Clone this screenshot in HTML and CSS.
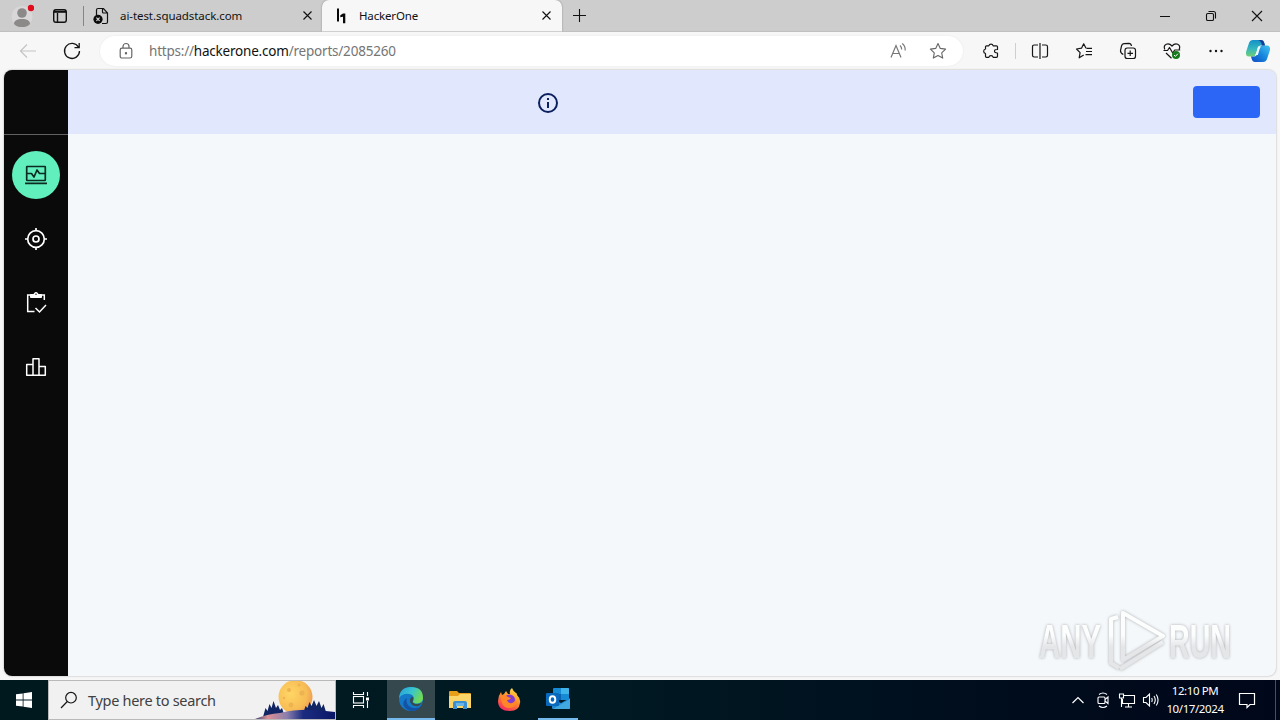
FILE: index.html
```html
<!DOCTYPE html>
<html lang="en">
<head>
  <meta charset="UTF-8">
  <meta name="viewport" content="width=device-width, initial-scale=1.0">
  <title>HackerOne</title>
  <link rel="stylesheet" href="styles.css">
</head>
<body>

  <!-- Tabs -->
  <header class="tab-bar">
    <svg class="avatar" width="24" height="24" viewBox="0 0 24 24">
      <circle cx="12" cy="12.500" r="10.500" fill="#d9d7d7"/>
      <circle cx="12" cy="9" r="4.800" fill="#8c8a89"/>
      <path d="M4 20c0-3.500 3-5 8-5s8 1.500 8 5c-2 2.500-5 3-8 3s-6-.5-8-3z" fill="#8c8a89"/>
      <circle cx="21" cy="4" r="3.200" fill="#e00b1c"/>
    </svg>
    <svg class="workspace" width="16" height="16" viewBox="0 0 16 16" fill="none" stroke="#111" stroke-width="1.400">
      <rect x="1.700" y="1.700" width="12.600" height="12.600" rx="2.200"/>
      <path d="M2 3.800h12" stroke-width="2"/>
      <path d="M5.500 5v9"/>
    </svg>
    <div class="tab">
      <svg class="favicon" width="18" height="18" viewBox="0 0 18 18">
        <path d="M4.500 8V3q0-1.500 1.500-1.500h5.500L15.500 6v9q0 1.500-1.500 1.500h-4M10.500 1.500V5q0 1 1 1h4" fill="none" stroke="#111" stroke-width="1.200"/>
        <circle cx="6" cy="12.300" r="4.600" fill="#0b0b0b"/>
        <path d="M4.400 10.700l3.200 3.200m0-3.200l-3.200 3.200" stroke="#ddd" stroke-width="1.100"/>
      </svg>
      <span class="tab-title tab-title-first">ai-test.squadstack.com</span>
      <svg class="tab-close" width="11" height="11" viewBox="0 0 11 11" stroke="#111" stroke-width="1.100"><path d="M1.500 1.500l8 8m0-8l-8 8"/></svg>
    </div>
    <div class="tab active">
      <svg class="favicon" width="18" height="18" viewBox="0 0 18 18" fill="#080808">
        <path d="M5 1.500h2v13H5zM8.300 8.200L11 6.500h2.300v9.800H11V9.800l-2.700.5z"/>
      </svg>
      <span class="tab-title">HackerOne</span>
      <svg class="tab-close" width="11" height="11" viewBox="0 0 11 11" stroke="#111" stroke-width="1.100"><path d="M1.500 1.500l8 8m0-8l-8 8"/></svg>
    </div>
    <svg class="new-tab" width="15" height="15" viewBox="0 0 15 15" stroke="#111" stroke-width="1.100"><path d="M7.500 1v13M1 7.500h13"/></svg>
    <div class="window-buttons">
      <svg width="12" height="12" viewBox="0 0 12 12" fill="none" stroke="#111"><path d="M1 6.500h10"/></svg>
      <svg width="12" height="12" viewBox="0 0 12 12" fill="none" stroke="#111" stroke-width="1.100"><rect x="1.500" y="3.500" width="7" height="7" rx="1.300"/><path d="M3.500 1.500H8.500q2 0 2 2v5"/></svg>
      <svg width="12" height="12" viewBox="0 0 12 12" fill="none" stroke="#111" stroke-width="1.100"><path d="M1 1l10 10m0-10L1 11"/></svg>
    </div>
  </header>

  <!-- Address bar and tools -->
  <div class="toolbar">
    <span class="tool"><svg width="20" height="20" viewBox="0 0 20 20" fill="none" stroke="#c4c4c4" stroke-width="1.200"><path d="M18 10H2.500M9 3.500L2.500 10 9 16.500"/></svg></span>
    <span class="tool"><svg width="20" height="20" viewBox="0 0 20 20" fill="none" stroke="#161616" stroke-width="1.300"><path d="M16.500 6.200A7.500 7.500 0 1 0 17.500 10M17.200 2v4.700h-4.700"/></svg></span>
    <div class="address">
      <svg class="lock" width="16" height="18" viewBox="0 0 16 18" fill="none" stroke="#666" stroke-width="1.200"><rect x="2.200" y="6.200" width="11.600" height="9.800" rx="1.800"/><path d="M5 6V4.500a3 3 0 0 1 6 0V6"/><circle cx="8" cy="11.200" r=".6" fill="#666"/></svg>
      <span class="url">https://<b>hackerone.com</b>/reports/2085260</span>
      <svg class="read" width="20" height="18" viewBox="0 0 20 18" fill="none" stroke="#777" stroke-width="1.200"><path d="M3 15.500L8 3.500l5 12M4.800 11.500h6.500M12 3.500q1.700 1.500 1.700 4M14.200 1.500Q17.500 4 17.200 8.500"/></svg>
      <svg width="18" height="18" viewBox="0 0 18 18" fill="none" stroke="#666" stroke-width="1.100" stroke-linejoin="round"><path d="M9 1.500l2.300 4.900 5.300.7-3.900 3.700 1 5.300L9 13.500l-4.700 2.600 1-5.300L1.400 7.100l5.300-.7z"/></svg>
    </div>
    <span class="tool tool-ext"><svg width="18" height="18" viewBox="0 0 18 18" fill="none" stroke="#161616" stroke-width="1.200" stroke-linejoin="round"><path d="M4.500 3.800h2.300a2.300 2.300 0 0 1 4.400 0h3.300q1 0 1 1v2.700q-3-.2-3 1.700t3 1.800v3.300q0 1-1 1h-3.300a2.300 2.300 0 0 0-4.400 0H4.500q-1 0-1-1v-2.800a2.300 2.300 0 0 1 0-4.500V4.800q0-1 1-1z"/></svg></span>
    <span class="separator"></span>
    <span class="tool"><svg width="18" height="18" viewBox="0 0 18 18" fill="none" stroke="#161616" stroke-width="1.200"><path d="M7 3H3.200q-1.700 0-1.700 1.700v8.600q0 1.700 1.700 1.700H7M11 3h3.800q1.700 0 1.700 1.700v8.600q0 1.700-1.700 1.700H11M9 1v16"/></svg></span>
    <span class="tool"><svg width="18" height="18" viewBox="0 0 18 18" fill="none" stroke="#161616" stroke-width="1.200" stroke-linejoin="round"><path d="M11 6.300L8.700 1.800 6.500 6.200l-5 .8 3.600 3.600-.9 5.200L8.700 13M11.500 6.300H17M11 9.500h6M10.500 12.700H17"/></svg></span>
    <span class="tool"><svg width="18" height="18" viewBox="0 0 18 18" fill="none" stroke="#161616" stroke-width="1.200"><rect x="6" y="6" width="10.500" height="10.500" rx="2.300"/><path d="M11.200 8.500v5.500M8.500 11.300H14M4.300 12.500Q1.300 11 1.500 8.500L2.500 4q.5-2 2.500-2.300l5-.4q2 0 2.500 2.700"/></svg></span>
    <span class="tool"><svg width="20" height="18" viewBox="0 0 20 18" fill="none" stroke="#161616" stroke-width="1.200" stroke-linejoin="round"><path d="M2.800 7.500Q1.200 3.500 4.300 2.200 7.300 1 10 4q2.700-3 5.700-1.800 3 1.300 1.500 5.300M1.500 8.500h4L7.500 5.500l3.200 5.500 2-3h5.500M4 11l5.500 5.200"/><circle cx="14" cy="13" r="4" fill="#157a1c" stroke="none"/><path d="M12 13l1.400 1.400 2.500-2.700" stroke="#fff" stroke-width="1"/></svg></span>
    <span class="tool"><svg width="18" height="18" viewBox="0 0 18 18" fill="#161616"><circle cx="3.500" cy="9" r="1.200"/><circle cx="9" cy="9" r="1.200"/><circle cx="14.500" cy="9" r="1.200"/></svg></span>
    <span class="tool tool-copilot">
      <svg width="26" height="24" viewBox="0 0 26 24">
        <defs>
          <linearGradient id="cop-left" x1="0" y1="0" x2="0" y2="1"><stop offset="0" stop-color="#148fc9"/><stop offset=".55" stop-color="#37b8bd"/><stop offset="1" stop-color="#72cf72"/></linearGradient>
          <linearGradient id="cop-right" x1="1" y1="0" x2="0" y2="1"><stop offset="0" stop-color="#43c6f2"/><stop offset=".5" stop-color="#1686dc"/><stop offset="1" stop-color="#1149c4"/></linearGradient>
        </defs>
        <path d="M8 1h8q2.500 0 3.300 3l.7 2.500h-4q-2.500 0-3.300 3L11 15q-.8 2.500-3 2.500H4Q.5 17.500 1 13L4 4Q5 1 8 1z" fill="url(#cop-left)"/>
        <path d="M18 23h-8q-2.500 0-3.300-3L6 17.500h3q2.500 0 3.300-3L14 9q.8-2.500 3-2.500h5q3.500 0 3 4.500l-3 9q-1 3-4 3z" fill="url(#cop-right)"/>
        <path d="M15 1h1q2.500 0 3.300 3l.7 2.500h-3Q16 1.500 13 1z" fill="#163f99"/>
        <path d="M13 7.500h3q-1 1-1.700 3.500l-1.400 5H10q1-1 1.500-3z" fill="#eefaff"/>
      </svg>
    </span>
  </div>

  <!-- Page -->
  <div class="viewport">
    <nav class="sidebar">
      <div class="logo-space"></div>
      <a class="nav-item selected"><svg width="24" height="24" viewBox="0 0 24 24" fill="none" stroke="#0b2b22" stroke-width="1.700" stroke-linejoin="round"><rect x="2.700" y="3.500" width="18.600" height="14" rx=".5"/><path d="M3 10.500h4.500L10 14l3-7 2.500 3.500H21M1 20.300h22"/></svg></a>
      <a class="nav-item"><svg width="24" height="24" viewBox="0 0 24 24" fill="none" stroke="#fff" stroke-width="1.700"><circle cx="12" cy="12" r="8.300"/><circle cx="12" cy="12" r="3"/><path d="M12 1v3M12 20v3M1 12h3M20 12h3"/></svg></a>
      <a class="nav-item"><svg width="24" height="24" viewBox="0 0 24 24" fill="none" stroke="#fff" stroke-width="1.500"><path d="M10.500 20.500H3.700V4H20.300v5M11.500 17l4 4L22 14"/><path d="M6.500 3.500h3.500a2 2 0 0 1 4 0h3.500v3h-11z" fill="#fff" stroke-width="1"/><circle cx="12" cy="3.300" r=".7" fill="#0a0a0a" stroke="none"/></svg></a>
      <a class="nav-item"><svg width="24" height="24" viewBox="0 0 24 24" fill="none" stroke="#fff" stroke-width="1.500" stroke-linejoin="round"><path d="M9 20.300V3.700h6v16.600zM9 9.500H2.700v10.800H9M15 11.500h6.300v8.800H15"/></svg></a>
    </nav>
    <main>
      <div class="banner">
        <svg class="info" width="24" height="24" viewBox="0 0 24 24"><circle cx="12" cy="12" r="9" fill="none" stroke="#0c205f" stroke-width="2"/><path d="M11 11h2v6h-2zM11 7h2v2h-2z" fill="#0c205f"/></svg>
        <button class="banner-button" aria-label="Dismiss"></button>
      </div>
    </main>
  </div>

  <!-- Taskbar -->
  <footer class="taskbar">
    <div class="start"><svg width="16" height="16" viewBox="0 0 16 16" fill="#fff"><path d="M0 2.300l6.700-.9v6.100H0zM7.500 1.300L16 0v7.500H7.500zM0 8.500h6.700v6.100L0 13.700zM7.500 8.500H16V16l-8.500-1.300z"/></svg></div>
    <div class="search">
      <svg class="search-icon" width="18" height="18" viewBox="0 0 18 18" fill="none" stroke="#161616" stroke-width="1.200"><circle cx="11" cy="6.700" r="5.300"/><path d="M7.300 10.500L1 17"/></svg>
      <span class="search-label">Type here to search</span>
      <svg class="scene" width="80" height="38" viewBox="0 0 80 38">
        <defs>
          <linearGradient id="hill" x1="0" y1="0" x2="1" y2="0"><stop offset="0" stop-color="#33417d"/><stop offset=".16" stop-color="#dc8f94"/><stop offset=".4" stop-color="#8a7fae"/><stop offset=".6" stop-color="#1b2c80"/><stop offset="1" stop-color="#0b1767"/></linearGradient>
          <radialGradient id="moon" cx=".35" cy=".4" r=".7"><stop offset="0" stop-color="#ffd665"/><stop offset=".7" stop-color="#f7bc55"/><stop offset="1" stop-color="#ec9852"/></radialGradient>
        </defs>
        <circle cx="40.500" cy="16" r="17" fill="url(#moon)"/>
        <g fill="#edb252"><circle cx="34" cy="9" r="2"/><circle cx="47" cy="12" r="2.600"/><circle cx="36" cy="24" r="2.400"/><circle cx="44" cy="4" r="1.500"/><circle cx="29" cy="17" r="1.200"/></g>
        <path d="M8 36l2.500-9 2 3 2-7 2 4 2-7 2.500 7 2-3 2 5 2-2 3 9zM48 33l2.500-8 2 2 2-6 2 4 2.500-6 2.500 6 2.500-5 2.500 7 2-4 3.500 11z" fill="#112463"/>
        <path d="M0 38q12-5 25-6 16-4 36-3 10 1 19 2v7z" fill="url(#hill)"/>
      </svg>
    </div>
    <div class="task"><svg width="18" height="18" viewBox="0 0 18 18" fill="none" stroke="#fff" stroke-width="1.100"><path d="M1.500 1v2.500h10V1M1.500 17v-2.500h10V17M15.500 1v4M15.500 10v7"/><rect x="1.500" y="5.500" width="10" height="6.500"/><path d="M14 6.500h3v3h-3z" fill="#fff" stroke="none"/></svg></div>
    <div class="task running current">
      <svg width="26" height="26" viewBox="0 0 26 26">
        <defs><linearGradient id="edge-top" x1="0" y1="0" x2="1" y2=".4"><stop offset="0" stop-color="#279edb"/><stop offset=".55" stop-color="#38c5ce"/><stop offset="1" stop-color="#6fda58"/></linearGradient></defs>
        <circle cx="13" cy="13" r="12" fill="#1479c9"/>
        <path d="M1 12Q2 1 13 1q12 0 12 11c0 4-3 5.500-6.500 5.500-3 0-4.500-1.500-3-3Q17 9 11.500 8 5 7 1 12z" fill="url(#edge-top)"/>
        <path d="M9 12c-2 5 2 10 8 10 3 0 5-1 6-2-3 5-9 6-13 4-6-3-6-9-1-12z" fill="#1353a5"/>
        <path d="M14 10.500c3 2-.5 4.500 1 6 2 2.500 6 1.500 8.500.2-.7 2.300-2.500 3.500-4.500 3.500-6 .5-9.500-6-5-9.700z" fill="#344b4f"/>
      </svg>
    </div>
    <div class="task"><svg width="22" height="20" viewBox="0 0 22 20"><path d="M0 2q0-1 1-1h7l2 2h11q1 0 1 1v14H0z" fill="#e99e17"/><path d="M0 6h9l2-2h11v14H0z" fill="#fbd568"/><path d="M4 19v-6q0-2 2-2h10q2 0 2 2v6h-4v-3H8v3z" fill="#3991d3"/><path d="M7 13h8v3H7z" fill="#69b5e5"/></svg></div>
    <div class="task">
      <svg width="24" height="24" viewBox="0 0 24 24">
        <defs><linearGradient id="fox" x1=".8" y1="0" x2=".3" y2="1"><stop offset="0" stop-color="#ffe54a"/><stop offset=".45" stop-color="#ff9327"/><stop offset="1" stop-color="#f42b62"/></linearGradient></defs>
        <path d="M4 4l1 3 2-1 2-3 2 3h2q-1-4 2-6 1 3 4 5 1 0 1 2 4 4 3 8-1 8-10 8Q1 23 1 13q0-5 3-9z" fill="url(#fox)"/>
        <circle cx="12.500" cy="12" r="5.500" fill="#803bd2"/>
        <path d="M4 8q4-2 7 1l3 1q-1 2-4 2 1 4 5 3 4-1 3-6 4 10-6 11Q4 20 4 8z" fill="#ff8727"/>
      </svg>
    </div>
    <div class="task running outlook">
      <svg width="26" height="24" viewBox="0 0 26 24">
        <path d="M8 2q0-1 1-1h14q1 0 1 1v11H8z" fill="#168bd5"/><path d="M16 1h7q1 0 1 1v5h-8z" fill="#40b3e8"/><path d="M8 7h8v6H8z" fill="#0b62b2"/><path d="M7 12l9 4 9-5v10q0 1-1 1H8q-1 0-1-1z" fill="#1f86d0"/>
        <path d="M8 22l17-10v9q0 1-1 1z" fill="#42a9e0"/>
        <rect x="1" y="6" width="13" height="13" rx="1" fill="#0869bd"/><ellipse cx="7.500" cy="12.500" rx="2.800" ry="3.300" fill="none" stroke="#fff" stroke-width="1.900"/>
      </svg>
    </div>
    <div class="tray">
      <svg width="14" height="18" viewBox="0 0 14 18" fill="none" stroke="#fff" stroke-width="1.200"><path d="M1.500 12L7 6.500l5.500 5.500"/></svg>
      <svg class="meet" width="14" height="18" viewBox="0 0 14 18" fill="none" stroke="#fff" stroke-width="1.100"><rect x="2" y="6" width="7" height="6.500" rx="1"/><path d="M9 8.500L12 6v6.500L9 10M3 3.500q4-3 8 0M3 15q4 3 8 0"/></svg>
      <svg class="network" width="18" height="18" viewBox="0 0 18 18" fill="none" stroke="#fff" stroke-width="1.100"><path d="M6 4.500h10.500v8H4.500V8M10.500 13v3M7 16h7"/><path d="M1.500 3h4v4h-4zM3.500 7v9"/></svg>
      <svg class="volume" width="18" height="18" viewBox="0 0 18 18" fill="none" stroke="#fff" stroke-width="1.100"><path d="M1.500 6.500h2.500L7.500 3v12L4 11.500H1.500zM9.700 7q1 2 0 4M12 5q2.500 4 0 8M14.300 3.500q3.500 5.500 0 11"/></svg>
      <div class="clock"><span>12:10 PM</span><span>10/17/2024</span></div>
      <svg class="notice" width="18" height="18" viewBox="0 0 18 18" fill="none" stroke="#fff" stroke-width="1.200"><path d="M1.500 2.500h15v11H12l-3 3v-3H1.500z"/></svg>
      <span class="show-desktop"></span>
    </div>
  </footer>

  <svg class="watermark" width="210" height="70" viewBox="0 0 210 70">
    <defs>
      <linearGradient id="mark" gradientUnits="userSpaceOnUse" x1="0" y1="4" x2="0" y2="62"><stop offset=".4" stop-color="#fcfdfd"/><stop offset=".6" stop-color="#e4e6e8"/></linearGradient>
    </defs>
    <g class="mark-text" fill="url(#mark)">
      <text x="3" y="50" textLength="62" lengthAdjust="spacingAndGlyphs">ANY</text>
      <text x="133" y="50" textLength="62" lengthAdjust="spacingAndGlyphs">RUN</text>
    </g>
    <g fill="none" stroke="url(#mark)" stroke-width="4" stroke-linejoin="round">
      <path d="M82 9l-7 2v44l8 5"/>
      <path d="M127 28L87 5v47l40-24z"/>
      <path d="M127 34L84 61"/>
    </g>
  </svg>

</body>
</html>
```
FILE: styles.css
```css
* {
  margin: 0;
  padding: 0;
  box-sizing: border-box;
}

body {
  width: 1280px;
  height: 720px;
  overflow: hidden;
  display: flex;
  flex-direction: column;
  font-family: 'Noto Sans', 'Open Sans', sans-serif;
  background: #f7f7f7;
  color: #111;
}

svg {
  display: block;
  flex-shrink: 0;
}

/* Tabs */
.tab-bar {
  height: 32px;
  display: flex;
  align-items: center;
  background: #cdcdcd;
  border-bottom: 1px solid #c0c0c0;
}

.avatar {
  margin-left: 10px;
}

.workspace {
  margin-left: 18px;
}

.tab {
  width: 239px;
  height: 32px;
  display: flex;
  align-items: center;
  padding: 0 9px 0 9px;
  margin-left: 15px;
}

.tab:not(.active)::before {
  content: '';
  width: 1px;
  height: 20px;
  margin-right: 8px;
  margin-left: -9px;
  background: #858585;
}

.tab.active {
  width: 240px;
  margin-left: 0;
  padding: 0 10px;
  background: #f7f7f7;
  border-radius: 7px 7px 0 0;
  box-shadow: 0 0 2px rgba(0, 0, 0, 0.35);
  clip-path: inset(0 -3px 0 -3px);
}

.tab-title {
  font-size: 11.5px;
  white-space: nowrap;
  margin-left: 9px;
  letter-spacing: -0.15px;
}

.tab-title-first {
  margin-left: 10px;
  letter-spacing: -0.07px;
}

.tab-close {
  margin-left: auto;
}

.new-tab {
  margin-left: 10px;
}

.window-buttons {
  margin-left: auto;
  width: 138px;
  display: flex;
  justify-content: space-around;
}

/* Toolbar */
.toolbar {
  height: 38px;
  display: flex;
  align-items: center;
  padding-left: 6px;
  background: #f7f7f7;
}

.tool {
  width: 44px;
  display: flex;
  justify-content: center;
}

.tool-ext {
  margin-left: 6px;
}

.tool-copilot {
  width: 40px;
}

.separator {
  width: 1px;
  height: 16px;
  margin: 0 2px 0 2px;
  background: #cfcfcf;
}

.address {
  width: 863px;
  height: 30px;
  margin-left: 6px;
  padding: 0 16px 0 18px;
  display: flex;
  align-items: center;
  background: #fff;
  border-radius: 15px;
  box-shadow: 0 0 2px rgba(0, 0, 0, 0.08);
}

.url {
  margin-left: 15px;
  font-size: 13.5px;
  letter-spacing: -0.21px;
  color: #757575;
  white-space: nowrap;
}

.url b {
  font-weight: 400;
  color: #111;
}

.read {
  margin-left: auto;
  margin-right: 21px;
}

/* Page */
.viewport {
  height: 606px;
  margin: 0 4px 4px;
  display: flex;
  background: #f5f8fb;
  border-radius: 8px;
  overflow: hidden;
  box-shadow: 0 0 2px rgba(0, 0, 0, 0.35);
}

.sidebar {
  width: 64px;
  background: #0a0a0a;
  display: flex;
  flex-direction: column;
  align-items: center;
}

.logo-space {
  width: 64px;
  height: 65px;
  border-bottom: 1px solid #626262;
}

.nav-item {
  width: 48px;
  height: 48px;
  margin-top: 16px;
  display: flex;
  align-items: center;
  justify-content: center;
  border-radius: 50%;
}

.nav-item.selected {
  background: #61efbd;
}

main {
  flex: 1;
}

.banner {
  height: 64px;
  padding: 0 16px 0 468px;
  display: flex;
  align-items: center;
  justify-content: space-between;
  background: #e1e8fd;
}

.info {
  margin-top: 2px;
}

.banner-button {
  width: 67px;
  height: 32px;
  border: none;
  border-radius: 4px;
  background: #2c66f6;
}

/* Taskbar */
.taskbar {
  height: 40px;
  display: flex;
  background: linear-gradient(90deg, #00191f, #001a23 45%, #000c1c 80%, #00071a);
  color: #fff;
}

.start {
  width: 48px;
  display: flex;
  align-items: center;
  justify-content: center;
}

.search {
  width: 288px;
  display: flex;
  align-items: center;
  padding-left: 11px;
  background: #f1f1f1;
  border: 1px solid #b9b9b9;
  color: #404040;
}

.search-label {
  margin-left: 10px;
  font-size: 14.5px;
  letter-spacing: -0.3px;
  white-space: nowrap;
}

.scene {
  margin-left: auto;
}

.task {
  width: 49px;
  display: flex;
  align-items: center;
  justify-content: center;
}

.running {
  width: 48px;
  border-bottom: 2px solid #76b9ed;
}

.current {
  margin-left: 2px;
  background: #34484e;
}

.outlook {
  width: 40px;
  margin-left: 5px;
}

.tray {
  margin-left: auto;
  display: flex;
  align-items: center;
}

.meet {
  margin-left: 11px;
}

.network {
  margin-left: 8px;
}

.volume {
  margin-left: 6px;
}

.clock {
  width: 60px;
  margin-left: 5px;
  display: flex;
  flex-direction: column;
  align-items: center;
  font-size: 11.5px;
  line-height: 18px;
  letter-spacing: -0.4px;
  white-space: nowrap;
}

.notice {
  margin-left: 13px;
}

.show-desktop {
  width: 5px;
  height: 40px;
  margin-left: 19px;
  border-left: 1px solid #45505e;
}

/* Watermark over the page */
.watermark {
  position: absolute;
  left: 1036px;
  top: 608px;
  filter: drop-shadow(0 0 1.500px rgba(0, 0, 0, 0.3));
}

.mark-text {
  font: 700 49px 'Liberation Sans Narrow', 'Liberation Sans', sans-serif;
}
```
